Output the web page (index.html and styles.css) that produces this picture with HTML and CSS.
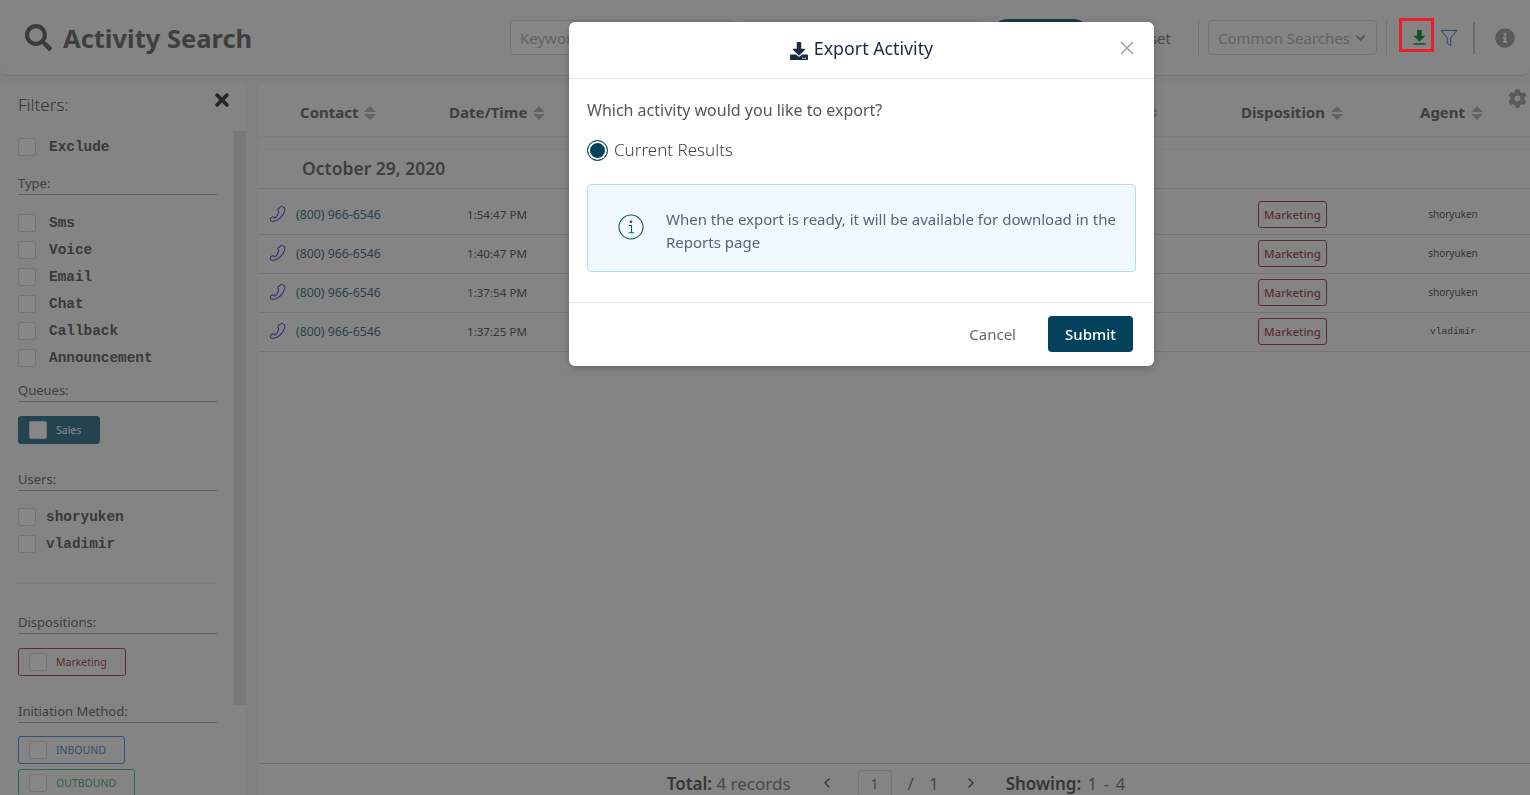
FILE: index.html
```html
<!DOCTYPE html>
<html lang="en">
<head>
    <meta charset="UTF-8">
    <title>Activity Search</title>
    <link rel="stylesheet" href="styles.css">
</head>
<body>
    <header class="topbar">
        <svg class="search-icon" viewBox="0 0 512 512"><path d="M505 442.7L405.3 343c-4.5-4.5-10.6-7-17-7H372c27.6-35.3 44-79.7 44-128C416 93.1 322.9 0 208 0S0 93.1 0 208s93.1 208 208 208c48.3 0 92.7-16.4 128-44v16.3c0 6.4 2.5 12.5 7 17l99.7 99.7c9.4 9.4 24.6 9.4 33.9 0l28.3-28.3c9.4-9.4 9.4-24.6.1-34zM208 336c-70.7 0-128-57.2-128-128 0-70.7 57.2-128 128-128 70.7 0 128 57.2 128 128 0 70.7-57.2 128-128 128z"/></svg>
        <h1>Activity Search</h1>
        <div class="tools">
            <div class="field keyword">Keyword</div>
            <div class="field dates">Date</div>
            <button class="search-btn">Search</button>
            <span class="reset">Reset</span>
            <span class="sep"></span>
            <div class="field common">Common Searches
                <svg class="chevron" viewBox="0 0 12 8"><path d="M1.5 1.5L6 6l4.5-4.5"/></svg>
            </div>
            <span class="sep"></span>
            <span class="export-btn">
                <svg viewBox="0 0 16 18"><path d="M5.5 1h5v6h4L8 13.5 1.5 7h4z"/><rect x="1.5" y="15" width="13" height="1.6"/></svg>
            </span>
            <svg class="filter-icon" viewBox="0 0 18 18"><path d="M1 1.5h16l-6.3 7.5v8l-3.4-2.8V9z"/></svg>
            <span class="sep sep-dark"></span>
            <svg class="info-icon" viewBox="0 0 512 512"><path d="M256 8C119.043 8 8 119.083 8 256c0 136.997 111.043 248 248 248s248-111.003 248-248C504 119.083 392.957 8 256 8zm0 110c23.196 0 42 18.804 42 42s-18.804 42-42 42-42-18.804-42-42 18.804-42 42-42zm56 254c0 6.627-5.373 12-12 12h-88c-6.627 0-12-5.373-12-12v-24c0-6.627 5.373-12 12-12h12v-64h-12c-6.627 0-12-5.373-12-12v-24c0-6.627 5.373-12 12-12h64c6.627 0 12 5.373 12 12v100h12c6.627 0 12 5.373 12 12v24z"/></svg>
        </div>
    </header>

    <div class="main">
        <aside class="sidebar">
            <div class="filters-head">
                <span>Filters:</span>
                <svg class="close-filters" viewBox="0 0 352 512"><path d="M242.72 256l100.07-100.07c12.28-12.28 12.28-32.19 0-44.48l-22.24-22.24c-12.28-12.28-32.19-12.28-44.48 0L176 189.28 75.93 89.21c-12.28-12.28-32.19-12.28-44.48 0L9.21 111.45c-12.28 12.28-12.28 32.19 0 44.48L109.28 256 9.21 356.07c-12.28 12.28-12.28 32.19 0 44.48l22.24 22.24c12.28 12.28 32.2 12.28 44.48 0L176 322.72l100.07 100.07c12.28 12.28 32.2 12.28 44.48 0l22.24-22.24c12.28-12.28 12.28-32.19 0-44.48L242.72 256z"/></svg>
            </div>
            <div class="filters-scroll">
                <div class="filters-body">
                    <label class="check"><i></i>Exclude</label>

                    <h4 class="type-title">Type:</h4>
                    <label class="check"><i></i>Sms</label>
                    <label class="check"><i></i>Voice</label>
                    <label class="check"><i></i>Email</label>
                    <label class="check"><i></i>Chat</label>
                    <label class="check"><i></i>Callback</label>
                    <label class="check"><i></i>Announcement</label>

                    <h4 class="queues-title">Queues:</h4>
                    <div class="chip chip-sales"><i></i>Sales</div>

                    <h4 class="users-title">Users:</h4>
                    <label class="check check-user"><i></i>shoryuken</label>
                    <label class="check check-user"><i></i>vladimir</label>

                    <hr class="divider">

                    <h4 class="disp-title">Dispositions:</h4>
                    <div class="chip chip-marketing"><i></i>Marketing</div>

                    <h4 class="init-title">Initiation Method:</h4>
                    <div class="chip chip-inbound"><i></i>INBOUND</div>
                    <div class="chip chip-outbound"><i></i>OUTBOUND</div>
                </div>
                <div class="scrollbar"></div>
            </div>
        </aside>

        <section class="content">
            <div class="table-head grid">
                <span class="th th-contact">Contact <svg class="sort" viewBox="0 0 12 14"><path d="M6 0l6 6H0zM6 14L0 8h12z"/></svg></span>
                <span class="th">Date/Time <svg class="sort" viewBox="0 0 12 14"><path d="M6 0l6 6H0zM6 14L0 8h12z"/></svg></span>
                <span class="th th-queue">Queue <svg class="sort" viewBox="0 0 12 14"><path d="M6 0l6 6H0zM6 14L0 8h12z"/></svg></span>
                <span class="th">Disposition <svg class="sort" viewBox="0 0 12 14"><path d="M6 0l6 6H0zM6 14L0 8h12z"/></svg></span>
                <span class="th">Agent <svg class="sort" viewBox="0 0 12 14"><path d="M6 0l6 6H0zM6 14L0 8h12z"/></svg></span>
            </div>
            <svg class="gear" viewBox="0 0 512 512"><path d="M487.4 315.7l-42.6-24.6c4.3-23.2 4.3-47 0-70.2l42.6-24.6c4.9-2.8 7.1-8.6 5.5-14-11.1-35.6-30-67.8-54.7-94.6-3.8-4.1-10-5.1-14.8-2.3L380.8 110c-17.9-15.4-38.5-27.3-60.8-35.1V25.8c0-5.6-3.9-10.5-9.4-11.7-36.7-8.2-74.3-7.8-109.2 0-5.5 1.2-9.4 6.1-9.4 11.7V75c-22.2 7.9-42.8 19.8-60.8 35.1L88.7 85.5c-4.9-2.8-11-1.9-14.8 2.3-24.7 26.7-43.6 58.9-54.7 94.6-1.7 5.4.6 11.2 5.5 14L67.3 221c-4.3 23.2-4.3 47 0 70.2l-42.6 24.6c-4.9 2.8-7.1 8.6-5.5 14 11.1 35.6 30 67.8 54.7 94.6 3.8 4.1 10 5.1 14.8 2.3l42.6-24.6c17.9 15.4 38.5 27.3 60.8 35.1v49.2c0 5.6 3.9 10.5 9.4 11.7 36.7 8.2 74.3 7.8 109.2 0 5.5-1.2 9.4-6.1 9.4-11.7v-49.2c22.2-7.9 42.8-19.8 60.8-35.1l42.6 24.6c4.9 2.8 11 1.9 14.8-2.3 24.7-26.7 43.6-58.9 54.7-94.6 1.5-5.5-.7-11.3-5.6-14.1zM256 336c-44.1 0-80-35.9-80-80s35.9-80 80-80 80 35.9 80 80-35.9 80-80 80z"/></svg>

            <div class="date-row">October 29, 2020</div>

            <div class="rows">
                <div class="row row-first grid">
                    <span class="contact"><svg class="phone" viewBox="0 0 16 16"><path d="M11.2 1l3 2c.2 3.5-2.8 8-6.3 10.2-2.3 1.5-5.3 1.7-6.3.6-.8-1-.3-2.5 1-3 1-.4 2.1 0 2.6.8 1.6-1 3-3.5 3.4-6-.7-.3-1-1.2-.5-2.1z"/></svg>(800) 966-6546</span>
                    <span class="time">1:54:47 PM</span>
                    <span></span>
                    <span class="disp"><b class="badge">Marketing</b></span>
                    <span class="agent">shoryuken</span>
                </div>
                <div class="row grid">
                    <span class="contact"><svg class="phone" viewBox="0 0 16 16"><path d="M11.2 1l3 2c.2 3.5-2.8 8-6.3 10.2-2.3 1.5-5.3 1.7-6.3.6-.8-1-.3-2.5 1-3 1-.4 2.1 0 2.6.8 1.6-1 3-3.5 3.4-6-.7-.3-1-1.2-.5-2.1z"/></svg>(800) 966-6546</span>
                    <span class="time">1:40:47 PM</span>
                    <span></span>
                    <span class="disp"><b class="badge">Marketing</b></span>
                    <span class="agent">shoryuken</span>
                </div>
                <div class="row grid">
                    <span class="contact"><svg class="phone" viewBox="0 0 16 16"><path d="M11.2 1l3 2c.2 3.5-2.8 8-6.3 10.2-2.3 1.5-5.3 1.7-6.3.6-.8-1-.3-2.5 1-3 1-.4 2.1 0 2.6.8 1.6-1 3-3.5 3.4-6-.7-.3-1-1.2-.5-2.1z"/></svg>(800) 966-6546</span>
                    <span class="time">1:37:54 PM</span>
                    <span></span>
                    <span class="disp"><b class="badge">Marketing</b></span>
                    <span class="agent">shoryuken</span>
                </div>
                <div class="row grid">
                    <span class="contact"><svg class="phone" viewBox="0 0 16 16"><path d="M11.2 1l3 2c.2 3.5-2.8 8-6.3 10.2-2.3 1.5-5.3 1.7-6.3.6-.8-1-.3-2.5 1-3 1-.4 2.1 0 2.6.8 1.6-1 3-3.5 3.4-6-.7-.3-1-1.2-.5-2.1z"/></svg>(800) 966-6546</span>
                    <span class="time">1:37:25 PM</span>
                    <span></span>
                    <span class="disp"><b class="badge">Marketing</b></span>
                    <span class="agent agent-mono">vladimir</span>
                </div>
            </div>

            <footer class="pager">
                <span class="total"><b>Total:</b> 4 records</span>
                <svg class="page-arrow prev" viewBox="0 0 8 12"><path d="M6.5 1.5L2 6l4.5 4.5"/></svg>
                <span class="page-input">1</span>
                <span class="slash">/</span>
                <span class="page-count">1</span>
                <svg class="page-arrow next" viewBox="0 0 8 12"><path d="M1.5 1.5L6 6l-4.5 4.5"/></svg>
                <span class="showing"><b>Showing:</b> 1 - 4</span>
            </footer>
        </section>
    </div>

    <div class="backdrop"></div>
    <div class="highlight"></div>

    <div class="modal">
        <div class="modal-head">
            <svg class="modal-icon" viewBox="0 0 512 512"><path d="M216 0h80c13.3 0 24 10.7 24 24v168h87.7c17.8 0 26.7 21.5 14.1 34.1L269.7 378.3c-7.5 7.5-19.8 7.5-27.3 0L90.1 226.1c-12.6-12.6-3.7-34.1 14.1-34.1H192V24c0-13.3 10.7-24 24-24zm296 376v112c0 13.3-10.7 24-24 24H24c-13.3 0-24-10.7-24-24V376c0-13.3 10.7-24 24-24h146.7l49 49c20.1 20.1 52.5 20.1 72.6 0l49-49H488c13.3 0 24 10.7 24 24zm-124 88c0-11-9-20-20-20s-20 9-20 20 9 20 20 20 20-9 20-20zm64 0c0-11-9-20-20-20s-20 9-20 20 9 20 20 20 20-9 20-20z"/></svg>
            <span>Export Activity</span>
            <svg class="modal-close" viewBox="0 0 14 14"><path d="M1 1l12 12M13 1L1 13"/></svg>
        </div>
        <div class="modal-body">
            <p class="question">Which activity would you like to export?</p>
            <div class="radio-row"><span class="radio"></span>Current Results</div>
            <div class="notice">
                <svg class="notice-icon" viewBox="0 0 26 26"><circle cx="13" cy="13" r="12"/><path d="M10.8 11.5h2.7v7M10.5 18.7h5.5"/><circle class="notice-dot" cx="13" cy="7.8" r="1.3"/></svg>
                <p>When the export is ready, it will be available for download in the Reports page</p>
            </div>
        </div>
        <div class="modal-foot">
            <span class="cancel">Cancel</span>
            <button class="submit">Submit</button>
        </div>
    </div>
</body>
</html>
```

FILE: styles.css
```css
* {
    box-sizing: border-box;
}
html, body {
    margin: 0;
    height: 795px;
    overflow: hidden;
}
body {
    font-family: "Noto Sans", "Open Sans", sans-serif;
    background-color: #f4f4f4;
    color: #333;
}

/* top bar */
.topbar {
    height: 76px;
    display: flex;
    align-items: center;
    padding-left: 25px;
    background-color: #fafafa;
    border-radius: 0 0 8px 8px;
    border-bottom: 1px solid #ddd;
}
.search-icon {
    width: 27px;
    height: 27px;
    fill: #707070;
    margin-right: 11px;
}
h1 {
    margin: 0;
    font-size: 25.5px;
    font-weight: 700;
    color: #777;
}
.tools {
    margin-left: auto;
    display: flex;
    align-items: center;
    height: 36px;
}
.field {
    height: 35px;
    border: 1px solid #ddd;
    border-radius: 4px;
    color: #bbb;
    font-size: 15px;
    display: flex;
    align-items: center;
    padding-left: 9px;
    background-color: #fff;
}
.keyword {
    width: 223px;
    margin-right: 10px;
}
.dates {
    width: 236px;
    margin-right: 10px;
}
.search-btn {
    width: 103px;
    height: 38px;
    border: none;
    border-radius: 19px;
    background-color: #30708a;
    color: #fff;
    margin-right: 39px;
}
.reset {
    font-size: 15px;
    color: #888;
    width: 40px;
    text-align: right;
    margin-right: 27px;
}
.sep {
    width: 1px;
    height: 36px;
    background-color: #ddd;
}
.sep-dark {
    width: 2px;
    height: 32px;
    margin-left: 15px;
    background-color: #ccc;
}
.common {
    width: 169px;
    margin: 0 9px;
    background-color: transparent;
    white-space: nowrap;
}
.chevron {
    width: 11px;
    height: 8px;
    margin-left: 5px;
    fill: none;
    stroke: #999;
    stroke-width: 1.8;
}
.export-btn {
    width: 35px;
    height: 34px;
    margin-left: 12px;
    padding-left: 5px;
    display: flex;
    align-items: center;
    justify-content: center;
}
.export-btn svg {
    width: 15px;
    height: 17px;
    fill: #2b9a4a;
}
.filter-icon {
    width: 18px;
    height: 18px;
    margin-left: 6px;
    fill: none;
    stroke: #4f7fd4;
    stroke-width: 1;
}
.info-icon {
    width: 20px;
    height: 20px;
    fill: #aaa;
    margin: 0 15px 0 20px;
}

/* layout */
.main {
    display: flex;
    height: 712px;
    margin-top: 7px;
    gap: 13px;
}

/* sidebar */
.sidebar {
    width: 246px;
    display: flex;
    flex-direction: column;
    background-color: #fafafa;
    border-radius: 0 8px 0 0;
    overflow: hidden;
}
.filters-head {
    height: 48px;
    flex: none;
    display: flex;
    justify-content: space-between;
    padding: 10px 17px 0 18px;
    font-size: 17px;
    font-weight: 300;
    color: #666;
}
.close-filters {
    width: 14px;
    height: 20px;
    margin-top: -3px;
    fill: #444;
}
.filters-scroll {
    display: flex;
    flex: 1;
    min-height: 0;
}
.filters-body {
    width: 234px;
    padding: 0 17px 0 18px;
    flex: none;
    overflow: hidden;
}
.scrollbar {
    width: 12px;
    flex: none;
    height: 574px;
    background-color: #e4e4e4;
}
.check {
    display: flex;
    align-items: center;
    height: 27px;
    font-family: "Liberation Mono", monospace;
    font-weight: 700;
    font-size: 14.4px;
    color: #6e6e6e;
}
.check i {
    width: 18px;
    height: 18px;
    margin-right: 13px;
    background-color: #fff;
    border: 1px solid #ddd;
    border-radius: 2px;
}
.check-user i {
    margin-right: 10px;
}
.filters-body > .check:first-child {
    margin-top: 2px;
}
h4 {
    margin: 0;
    font-size: 13px;
    font-weight: 400;
    color: #777;
    height: 22px;
    line-height: 21px;
    border-bottom: 1px solid #bbb;
}
.type-title {
    margin-top: 13px;
    margin-bottom: 14px;
}
.queues-title {
    margin-top: 9px;
    margin-bottom: 14px;
}
.users-title {
    margin-top: 25px;
    margin-bottom: 12px;
}
.disp-title {
    margin-top: 28px;
    margin-bottom: 14px;
}
.init-title {
    margin-top: 25px;
    margin-bottom: 13px;
}
.divider {
    margin: 26px -1px 0 0;
    border: none;
    border-top: 1px solid #eee;
}
.chip {
    height: 28px;
    width: max-content;
    display: flex;
    align-items: center;
    padding: 0 18px 0 10px;
    font-size: 10.5px;
    border: 1px solid;
    border-radius: 3px;
    margin-bottom: 5px;
}
.chip i {
    width: 18px;
    height: 18px;
    margin-right: 9px;
    border: 1px solid #ddd;
    border-radius: 2px;
    background-color: #fff;
}
.chip-sales {
    background-color: #447f9a;
    border-color: #447f9a;
    color: #fff;
}
.chip-marketing {
    border-color: #a8545a;
    color: #a8585f;
}
.chip-inbound {
    border-color: #5f9ae0;
    color: #6a94cc;
}
.chip-outbound {
    border-color: #5cc492;
    color: #5cb585;
}

/* table */
.content {
    flex: 1;
    position: relative;
    display: flex;
    flex-direction: column;
    background-color: #fafafa;
    border-radius: 8px 0 0 0;
    min-width: 0;
}
.grid {
    display: grid;
    grid-template-columns: 190px 170px 622px 179px 110px;
    align-items: center;
}
.table-head {
    height: 54px;
    padding-top: 4px;
    flex: none;
    border-bottom: 1px solid #eee;
}
.th {
    font-size: 15px;
    font-weight: 700;
    color: #777;
    white-space: nowrap;
}
.th-contact {
    padding-left: 41px;
}
.th-queue {
    text-align: right;
    padding-right: 83px;
}
.sort {
    width: 12px;
    height: 14px;
    fill: #bbb;
    vertical-align: -2px;
    margin-left: 2px;
}
.gear {
    position: absolute;
    top: 6px;
    right: 3px;
    width: 19px;
    height: 19px;
    fill: #aaa;
}
.date-row {
    margin-top: 12px;
    height: 40px;
    flex: none;
    display: flex;
    align-items: center;
    padding: 0 0 2px 43px;
    font-size: 17.5px;
    font-weight: 600;
    color: #777;
    border-top: 1px solid #f2f2f2;
    border-bottom: 1px solid #ddd;
}
.rows {
    flex: 1;
}
.row {
    height: 39px;
    padding-bottom: 2px;
    border-bottom: 1px solid #ddd;
    font-size: 11.6px;
}
.row-first {
    height: 46px;
    padding: 5px 0 0;
}
.contact {
    display: flex;
    align-items: center;
    padding-left: 10px;
    font-size: 12.3px;
    color: #4f7a8c;
}
.phone {
    width: 18px;
    height: 18px;
    margin-right: 9px;
    fill: none;
    stroke: #6a64d8;
    stroke-width: 1;
}
.time {
    padding-left: 18px;
    color: #666;
}
.disp {
    padding-left: 17px;
}
.badge {
    display: inline-block;
    width: 69px;
    height: 27px;
    line-height: 25px;
    text-align: center;
    font-weight: 500;
    font-size: 11.5px;
    color: #a8585f;
    border: 1px solid #a8545a;
    border-radius: 3px;
}
.agent {
    text-align: center;
    width: 66px;
    font-size: 10px;
    color: #666;
}
.agent-mono {
    font-family: "Liberation Mono", monospace;
    font-size: 9.6px;
}

/* pager */
.pager {
    height: 32px;
    flex: none;
    border-top: 1px solid #ccc;
    display: flex;
    justify-content: center;
    align-items: center;
    padding: 7px 0 0 3px;
    font-size: 17px;
    color: #888;
}
.pager b {
    font-weight: 600;
    color: #666;
}
.page-arrow {
    width: 8px;
    height: 12px;
    fill: none;
    stroke: #666;
    stroke-width: 1.3;
}
.prev {
    margin-left: 32px;
}
.page-input {
    width: 34px;
    height: 27px;
    margin-left: 27px;
    border: 1px solid #ddd;
    border-radius: 3px;
    text-align: center;
    font-size: 14px;
    line-height: 26px;
}
.slash {
    margin-left: 16px;
}
.page-count {
    margin-left: 15px;
}
.next {
    margin-left: 28px;
}
.showing {
    margin-left: 31px;
    word-spacing: 2px;
}

/* modal */
.backdrop {
    position: fixed;
    inset: 0;
    background-color: rgba(0, 0, 0, 0.47);
}
/* red box around the export button sits above the dimmed page */
.highlight {
    position: fixed;
    left: 1399px;
    top: 18px;
    width: 35px;
    height: 34px;
    border: 3px solid #e8202a;
}
.modal {
    position: fixed;
    left: 569px;
    top: 22px;
    width: 585px;
    height: 344px;
    background-color: #fff;
    border-radius: 6px;
    box-shadow: 0 2px 8px rgba(0, 0, 0, 0.25);
    display: flex;
    flex-direction: column;
}
.modal-head {
    height: 57px;
    flex: none;
    position: relative;
    display: flex;
    align-items: center;
    justify-content: center;
    padding-bottom: 4px;
    font-size: 17.8px;
    color: #1c2a42;
    border-bottom: 1px solid #e8e8e8;
}
.modal-icon {
    width: 18px;
    height: 18px;
    margin-right: 6px;
    fill: #1c2a42;
    margin-top: 5px;
}
.modal-close {
    position: absolute;
    right: 20px;
    top: 19px;
    width: 14px;
    height: 14px;
    stroke: #999;
    stroke-width: 1.2;
    fill: none;
}
.modal-body {
    height: 224px;
    flex: none;
    padding: 0 18px;
    border-bottom: 1px solid #e8e8e8;
}
.question {
    margin: 20px 0 0;
    font-size: 16px;
    line-height: 22px;
    color: #555;
}
.radio-row {
    margin-top: 17px;
    display: flex;
    align-items: center;
    font-size: 17px;
    font-weight: 300;
    line-height: 24px;
    color: #444;
}
.radio {
    width: 21px;
    height: 21px;
    margin-right: 6px;
    border: 1px solid #04425c;
    border-radius: 50%;
    background-color: #04425c;
    box-shadow: inset 0 0 0 2px #fff;
}
.notice {
    margin-top: 22px;
    height: 88px;
    padding: 0 16px 0 30px;
    display: flex;
    align-items: center;
    background-color: #f0f9ff;
    border: 1px solid #b6dcee;
    border-radius: 4px;
}
.notice-icon {
    width: 26px;
    height: 26px;
    flex: none;
    margin: 0 22px 2px 0;
    fill: none;
    stroke: #1d5568;
    stroke-width: 1.1;
}
.notice-dot {
    fill: #1d5568;
    stroke: none;
}
.notice p {
    margin: 6px 0 0;
    font-size: 15px;
    line-height: 23px;
    color: #566476;
}
.modal-foot {
    flex: 1;
    display: flex;
    align-items: center;
    justify-content: flex-end;
    padding: 0 21px 2px 0;
}
.cancel {
    font-size: 15px;
    color: #666;
    margin-right: 32px;
}
.submit {
    width: 85px;
    height: 36px;
    border: none;
    border-radius: 4px;
    background-color: #04425c;
    color: #fff;
    font-family: inherit;
    font-size: 15px;
    font-weight: 500;
}
```
